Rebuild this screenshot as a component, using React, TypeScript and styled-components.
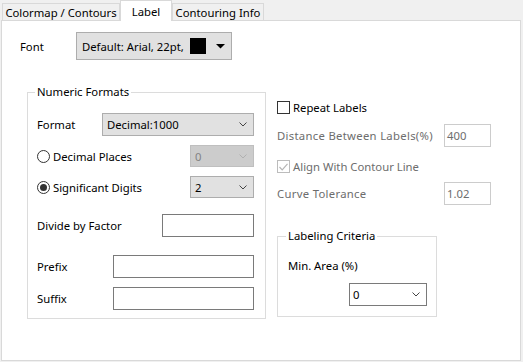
import styled, { createGlobalStyle } from 'styled-components';

const GlobalStyle = createGlobalStyle`
  html, body { margin: 0; padding: 0; background: #f0f0f0; }
  body {
    font-family: "Noto Sans", "Open Sans", sans-serif;
    font-size: 11.3px;
    color: #000;
  }
  * { box-sizing: border-box; }
`;

const Window = styled.div`
  width: 523px;
  height: 362px;
  background: #f0f0f0;
  display: flex;
  flex-direction: column;
  overflow: hidden;
`;

const TabStrip = styled.div`
  display: flex;
  align-items: flex-end;
  height: 20px;
  padding-left: 2px;
`;

const Tab = styled.div<{ $active?: boolean; $w: number }>`
  width: ${(p) => p.$w}px;
  height: ${(p) => (p.$active ? 21 : 17)}px;
  margin-bottom: ${(p) => (p.$active ? -1 : 0)}px;
  border: 1px solid #d9d9d9;
  border-bottom: none;
  background: ${(p) => (p.$active ? '#fff' : '#f0f0f0')};
  position: relative;
  z-index: ${(p) => (p.$active ? 1 : 0)};
  display: flex;
  align-items: center;
  justify-content: center;
  white-space: nowrap;
`;

const Panel = styled.div`
  margin-left: 1px;
  width: 520px;
  height: 341px;
  border: 1px solid #d9d9d9;
  background: #fff;
  display: flex;
  flex-direction: column;
`;

const FontRow = styled.div`
  display: flex;
  align-items: center;
  height: 28px;
  margin-top: 11px;
  padding-left: 18px;
`;

const FontLabel = styled.span`
  width: 56px;
`;

const FontCombo = styled.div`
  width: 156px;
  height: 28px;
  border: 1px solid #adadad;
  background: #e1e1e1;
  display: flex;
  align-items: center;
  padding: 0 6px 0 5px;
`;

const FontName = styled.span`
  white-space: nowrap;
`;

const ComboText = styled.span<{ $disabled?: boolean }>`
  flex: 1;
  white-space: nowrap;
  color: ${(p) => (p.$disabled ? '#838383' : '#000')};
`;

const Swatch = styled.span`
  width: 16px;
  height: 16px;
  margin-left: 6px;
  background: #000;
`;

const DropTriangle = styled.svg`
  margin-left: auto;
  flex-shrink: 0;
`;

const Body = styled.div`
  display: flex;
  align-items: flex-start;
  margin-top: 25px;
  padding-left: 25px;
`;

const Group = styled.fieldset<{ $w: number }>`
  width: ${(p) => p.$w}px;
  margin: 0;
  border: 1px solid #dcdcdc;
  display: flex;
  flex-direction: column;
`;

const LeftGroup = styled(Group)`
  padding: 0 11px 8px 9px;
`;

const CriteriaGroup = styled(Group)`
  margin-top: 24px;
  padding: 0 9px 10px 10px;
`;

const Legend = styled.legend`
  padding: 0 2px;
  margin-left: -2px;
  line-height: 14px;
`;

const Row = styled.div<{ $top: number; $h: number }>`
  display: flex;
  align-items: center;
  justify-content: space-between;
  height: ${(p) => p.$h}px;
  margin-top: ${(p) => p.$top}px;
`;

const Label = styled.span<{ $disabled?: boolean; $spaced?: boolean }>`
  white-space: nowrap;
  color: ${(p) => (p.$disabled ? '#6d6d6d' : '#000')};
  letter-spacing: ${(p) => (p.$spaced ? '0.3px' : 'normal')};
`;

const Combo = styled.div<{ $w: number; $kind?: 'button' | 'disabled' | 'edit' }>`
  width: ${(p) => p.$w}px;
  height: 100%;
  display: flex;
  align-items: center;
  padding: 0 6px 0 ${(p) => (p.$kind === 'edit' ? 3 : 4)}px;
  border: 1px solid
    ${(p) => (p.$kind === 'disabled' ? '#bfbfbf' : p.$kind === 'edit' ? '#7a7a7a' : '#adadad')};
  background: ${(p) => (p.$kind === 'disabled' ? '#cccccc' : p.$kind === 'edit' ? '#fff' : '#e1e1e1')};
`;

const TextBox = styled.div<{ $w: number; $disabled?: boolean }>`
  width: ${(p) => p.$w}px;
  height: 100%;
  border: 1px solid ${(p) => (p.$disabled ? '#cccccc' : '#7a7a7a')};
  background: #fff;
  color: #6d6d6d;
  display: flex;
  align-items: center;
  padding-left: 2px;
`;

const Choice = styled.label<{ $disabled?: boolean }>`
  display: flex;
  align-items: center;
  gap: 3px;
  white-space: nowrap;
  color: ${(p) => (p.$disabled ? '#6d6d6d' : '#000')};
`;

const Radio = styled.span<{ $checked?: boolean }>`
  width: 13px;
  height: 13px;
  border-radius: 50%;
  border: 1px solid #333;
  background: #fff;
  display: flex;
  align-items: center;
  justify-content: center;
  &::after {
    content: '';
    width: 7px;
    height: 7px;
    border-radius: 50%;
    background: ${(p) => (p.$checked ? '#333' : 'transparent')};
  }
`;

const CheckBox = styled.span<{ $disabled?: boolean }>`
  width: 13px;
  height: 13px;
  border: 1px solid ${(p) => (p.$disabled ? '#bcbcbc' : '#333')};
  background: #fff;
  display: flex;
  align-items: center;
  justify-content: center;
`;

const RightColumn = styled.div`
  display: flex;
  flex-direction: column;
  width: 214px;
  margin-left: 11px;
  padding-top: 16px;
`;

const CriteriaCombo = styled.div`
  margin-top: 11px;
  margin-left: 61px;
  height: 23px;
  display: flex;
`;

function Chevron({ color = '#444' }: { color?: string }) {
  return (
    <svg width="8" height="5" viewBox="0 0 8 5">
      <polyline points="0.5,0.5 4,4 7.5,0.5" fill="none" stroke={color} strokeWidth="1" />
    </svg>
  );
}

export default function App() {
  return (
    <>
      <GlobalStyle />
      <Window>
        <TabStrip>
          <Tab $w={118}>Colormap / Contours</Tab>
          <Tab $w={52} $active>Label</Tab>
          <Tab $w={92}>Contouring Info</Tab>
        </TabStrip>
        <Panel>
          <FontRow>
            <FontLabel>Font</FontLabel>
            <FontCombo>
              <FontName>Default: Arial, 22pt,</FontName>
              <Swatch />
              <DropTriangle width="9" height="5" viewBox="0 0 9 5">
                <polygon points="0,0 9,0 4.5,4.5" fill="#000" />
              </DropTriangle>
            </FontCombo>
          </FontRow>

          <Body>
            <LeftGroup $w={239}>
              <Legend>Numeric Formats</Legend>
              <Row $top={14} $h={23}>
                <Label>Format</Label>
                <Combo $w={152}>
                  <ComboText>Decimal:1000</ComboText>
                  <Chevron />
                </Combo>
              </Row>
              <Row $top={9} $h={22}>
                <Choice>
                  <Radio />
                  Decimal Places
                </Choice>
                <Combo $w={64} $kind="disabled">
                  <ComboText $disabled>0</ComboText>
                  <Chevron color="#b0b0b0" />
                </Combo>
              </Row>
              <Row $top={9} $h={22}>
                <Choice>
                  <Radio $checked />
                  Significant Digits
                </Choice>
                <Combo $w={64}>
                  <ComboText>2</ComboText>
                  <Chevron />
                </Combo>
              </Row>
              <Row $top={16} $h={23}>
                <Label>Divide by Factor</Label>
                <TextBox $w={92} />
              </Row>
              <Row $top={18} $h={23}>
                <Label>Prefix</Label>
                <TextBox $w={141} />
              </Row>
              <Row $top={9} $h={23}>
                <Label>Suffix</Label>
                <TextBox $w={141} />
              </Row>
            </LeftGroup>

            <RightColumn>
              <Row $top={0} $h={13}>
                <Choice>
                  <CheckBox />
                  Repeat Labels
                </Choice>
              </Row>
              <Row $top={10} $h={23}>
                <Label $disabled $spaced>Distance Between Labels(%)</Label>
                <TextBox $w={47} $disabled>400</TextBox>
              </Row>
              <Row $top={13} $h={13}>
                <Choice $disabled>
                  <CheckBox $disabled>
                    <svg width="9" height="8" viewBox="0 0 9 8">
                      <polyline points="0.5,4 3.2,6.8 8.5,0.8" fill="none" stroke="#b5b5b5" strokeWidth="1.2" />
                    </svg>
                  </CheckBox>
                  Align With Contour Line
                </Choice>
              </Row>
              <Row $top={9} $h={23}>
                <Label $disabled $spaced>Curve Tolerance</Label>
                <TextBox $w={47} $disabled>1.02</TextBox>
              </Row>

              <CriteriaGroup $w={160}>
                <Legend>Labeling Criteria</Legend>
                <Row $top={15} $h={14}>
                  <Label>Min. Area (%)</Label>
                </Row>
                <CriteriaCombo>
                  <Combo $w={78} $kind="edit">
                    <ComboText>0</ComboText>
                    <Chevron />
                  </Combo>
                </CriteriaCombo>
              </CriteriaGroup>
            </RightColumn>
          </Body>
        </Panel>
      </Window>
    </>
  );
}
